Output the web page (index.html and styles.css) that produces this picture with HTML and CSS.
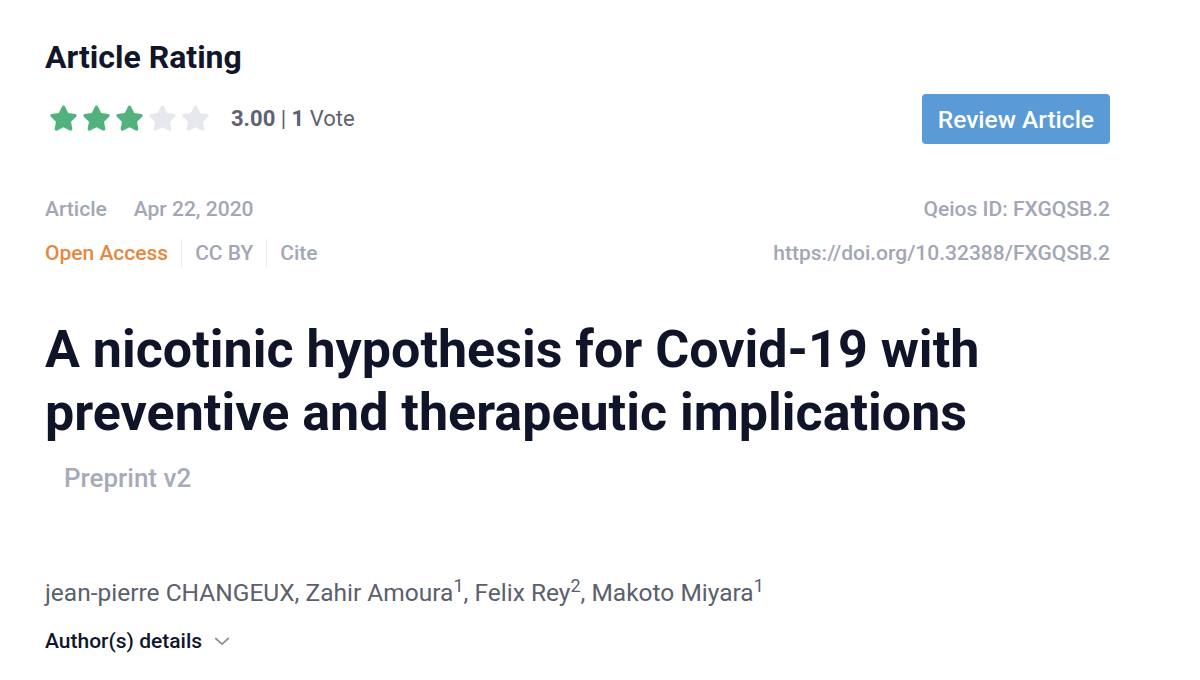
FILE: index.html
```html
<!DOCTYPE html>
<html>
<head>
<meta charset="utf-8">
<link rel="stylesheet" href="styles.css">
</head>
<body>
<main class="page">
  <section class="rating">
    <div class="rating-left">
      <h2 class="rating-title">Article Rating</h2>
      <div class="rating-row">
        <div class="stars">
          <svg class="star on" viewBox="0 0 24 24"><path d="M12 2.6c.5 0 .9.3 1.1.7l2.3 4.7 5.1.8c1 .1 1.4 1.3.7 2l-3.7 3.6.9 5.1c.2 1-.9 1.7-1.8 1.3L12 18.4l-4.6 2.4c-.9.5-2-.3-1.8-1.3l.9-5.1-3.7-3.6c-.7-.7-.3-1.9.7-2l5.1-.8 2.3-4.7c.2-.4.6-.7 1.1-.7z"/></svg>
          <svg class="star on" viewBox="0 0 24 24"><path d="M12 2.6c.5 0 .9.3 1.1.7l2.3 4.7 5.1.8c1 .1 1.4 1.3.7 2l-3.7 3.6.9 5.1c.2 1-.9 1.7-1.8 1.3L12 18.4l-4.6 2.4c-.9.5-2-.3-1.8-1.3l.9-5.1-3.7-3.6c-.7-.7-.3-1.9.7-2l5.1-.8 2.3-4.7c.2-.4.6-.7 1.1-.7z"/></svg>
          <svg class="star on" viewBox="0 0 24 24"><path d="M12 2.6c.5 0 .9.3 1.1.7l2.3 4.7 5.1.8c1 .1 1.4 1.3.7 2l-3.7 3.6.9 5.1c.2 1-.9 1.7-1.8 1.3L12 18.4l-4.6 2.4c-.9.5-2-.3-1.8-1.3l.9-5.1-3.7-3.6c-.7-.7-.3-1.9.7-2l5.1-.8 2.3-4.7c.2-.4.6-.7 1.1-.7z"/></svg>
          <svg class="star off" viewBox="0 0 24 24"><path d="M12 2.6c.5 0 .9.3 1.1.7l2.3 4.7 5.1.8c1 .1 1.4 1.3.7 2l-3.7 3.6.9 5.1c.2 1-.9 1.7-1.8 1.3L12 18.4l-4.6 2.4c-.9.5-2-.3-1.8-1.3l.9-5.1-3.7-3.6c-.7-.7-.3-1.9.7-2l5.1-.8 2.3-4.7c.2-.4.6-.7 1.1-.7z"/></svg>
          <svg class="star off" viewBox="0 0 24 24"><path d="M12 2.6c.5 0 .9.3 1.1.7l2.3 4.7 5.1.8c1 .1 1.4 1.3.7 2l-3.7 3.6.9 5.1c.2 1-.9 1.7-1.8 1.3L12 18.4l-4.6 2.4c-.9.5-2-.3-1.8-1.3l.9-5.1-3.7-3.6c-.7-.7-.3-1.9.7-2l5.1-.8 2.3-4.7c.2-.4.6-.7 1.1-.7z"/></svg>
        </div>
        <span class="score"><b>3.00</b> | <b>1</b> Vote</span>
      </div>
    </div>
    <button class="review-btn">Review Article</button>
  </section>

  <section class="meta">
    <div class="meta-row">
      <div class="meta-left">
        <span>Article</span>
        <span class="date">Apr 22, 2020</span>
      </div>
      <span>Qeios ID: FXGQSB.2</span>
    </div>
    <div class="meta-row">
      <div class="meta-left links">
        <span class="oa">Open Access</span>
        <span class="sep"></span>
        <span>CC BY</span>
        <span class="sep"></span>
        <span>Cite</span>
      </div>
      <span>https://doi.org/10.32388/FXGQSB.2</span>
    </div>
  </section>

  <h1 class="title">A nicotinic hypothesis for Covid-19 with preventive and therapeutic implications</h1>
  <div class="version">Preprint v2</div>

  <p class="authors">jean-pierre CHANGEUX, Zahir Amoura<sup>1</sup>, Felix Rey<sup>2</sup>, Makoto Miyara<sup>1</sup></p>
  <div class="details">Author(s) details
    <svg class="chev" viewBox="0 0 16 16"><path d="M3 6l5 4.5L13 6" fill="none" stroke="#8b909c" stroke-width="1.4" stroke-linecap="round" stroke-linejoin="round"/></svg>
  </div>
</main>
</body>
</html>
```

FILE: styles.css
```css
* { box-sizing: border-box; }
html, body { margin: 0; padding: 0; background: #fff; }
body { font-family: Roboto, "Liberation Sans", Arial, sans-serif; }

.page {
  width: 1200px;
  padding: 37px 90px 0 45px;
}

.rating {
  display: flex;
  justify-content: space-between;
  align-items: flex-start;
}
.rating-title {
  margin: 0;
  font-size: 32px;
  font-weight: 700;
  color: #11162b;
  line-height: 40px;
}
.rating-row {
  display: flex;
  align-items: center;
  margin-top: 21px;
  height: 40px;
}
.stars { display: flex; margin-left: 2px; }
.star { width: 33px; height: 33px; }
.star.on { fill: #52b27e; }
.star.off { fill: #e6e8ee; }
.score {
  margin-left: 19px;
  font-size: 22px;
  color: #5d6272;
}
.score b { font-weight: 700; color: #5d6272; }

.review-btn {
  font-family: inherit;
  background: #5a9ad6;
  color: #fff;
  border: none;
  border-radius: 4px;
  font-size: 24.5px;
  font-weight: 500;
  height: 50px;
  padding: 0 16px;
  margin-top: 57px;
}

.meta { margin-top: 43px; }
.meta-row {
  display: flex;
  justify-content: space-between;
  align-items: center;
  font-size: 21px;
  font-weight: 500;
  color: #a2a7b5;
  height: 44px;
}
.meta-left { display: flex; align-items: center; }
.date { margin-left: 27px; }
.links .sep {
  width: 1px;
  height: 28px;
  background: #e8eaee;
  margin: 0 13px;
}
.oa { color: #e5883f; }

.title {
  margin: 43px 0 0;
  font-size: 52px;
  font-weight: 700;
  line-height: 63px;
  color: #0f1429;
}
.version {
  margin: 18px 0 0 19px;
  font-size: 26px;
  line-height: 32px;
  font-weight: 500;
  color: #a6abbb;
}

.authors {
  margin: 84px 0 0;
  font-size: 24.5px;
  line-height: 30px;
  color: #5b606c;
}
.authors sup { font-size: 18px; line-height: 0; }

.details {
  margin-top: 20px;
  display: flex;
  align-items: center;
  font-size: 21px;
  line-height: 26px;
  font-weight: 500;
  color: #11162b;
}
.chev { width: 20px; height: 20px; margin-left: 10px; }
```
